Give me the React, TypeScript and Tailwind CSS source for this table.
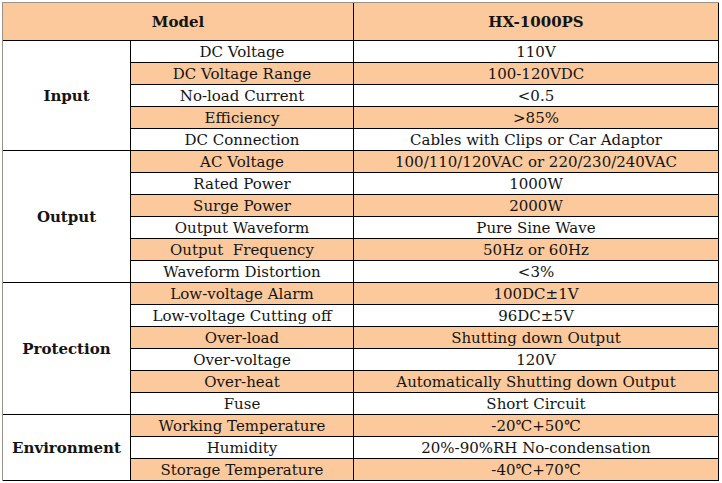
const groups: { name: string; rows: [string, string][] }[] = [
  {
    name: 'Input',
    rows: [
      ['DC Voltage', '110V'],
      ['DC Voltage Range', '100-120VDC'],
      ['No-load Current', '<0.5'],
      ['Efficiency', '>85%'],
      ['DC Connection', 'Cables with Clips or Car Adaptor'],
    ],
  },
  {
    name: 'Output',
    rows: [
      ['AC Voltage', '100/110/120VAC or 220/230/240VAC'],
      ['Rated Power', '1000W'],
      ['Surge Power', '2000W'],
      ['Output Waveform', 'Pure Sine Wave'],
      ['Output  Frequency', '50Hz or 60Hz'],
      ['Waveform Distortion', '<3%'],
    ],
  },
  {
    name: 'Protection',
    rows: [
      ['Low-voltage Alarm', '100DC±1V'],
      ['Low-voltage Cutting off', '96DC±5V'],
      ['Over-load', 'Shutting down Output'],
      ['Over-voltage', '120V'],
      ['Over-heat', 'Automatically Shutting down Output'],
      ['Fuse', 'Short Circuit'],
    ],
  },
  {
    name: 'Environment',
    rows: [
      ['Working Temperature', '-20℃+50℃'],
      ['Humidity', '20%-90%RH No-condensation'],
      ['Storage Temperature', '-40℃+70℃'],
    ],
  },
];

const font = { fontFamily: '"DejaVu Serif", "Liberation Serif", serif' };

export default function App() {
  let idx = 0;
  return (
    <div className="h-[483px] w-[722px] bg-white pl-[2px] pt-[2px] text-[#141414]" style={font}>
      <div className="grid w-[717px] grid-cols-[128px_223px_365px] border-l border-t border-[#9a9186]">
        <div className="col-span-2 flex h-[38px] items-center justify-center border-r border-b border-black bg-[#fbc99b] pt-px text-[15px] font-bold">
          Model
        </div>
        <div className="flex h-[38px] items-center justify-center border-r border-b border-black bg-[#fbc99b] pt-px text-[15px] font-bold">
          HX-1000PS
        </div>
        {groups.map((g) => (
          <div key={g.name} className="contents">
            <div
              className={
                g.rows.length === 3
                  ? 'row-span-3 flex items-center justify-center border-r border-b border-black bg-white pt-px text-[15px] font-bold'
                  : g.rows.length === 5
                    ? 'row-span-5 flex items-center justify-center border-r border-b border-black bg-white pt-px text-[15px] font-bold'
                    : 'row-span-6 flex items-center justify-center border-r border-b border-black bg-white pt-px text-[15px] font-bold'
              }
            >
              {g.name}
            </div>
            {g.rows.map(([label, value]) => {
              const orange = idx++ % 2 === 1;
              const bg = orange ? 'bg-[#fbc99b]' : 'bg-white';
              return (
                <div key={label} className="contents">
                  <div
                    className={`flex h-[22px] items-center justify-center whitespace-pre border-r border-b border-black ${bg} pt-px text-[15px]`}
                  >
                    {label}
                  </div>
                  <div
                    className={`flex h-[22px] items-center justify-center border-r border-b border-black ${bg} pt-px text-[15px]`}
                  >
                    {value}
                  </div>
                </div>
              );
            })}
          </div>
        ))}
      </div>
    </div>
  );
}
